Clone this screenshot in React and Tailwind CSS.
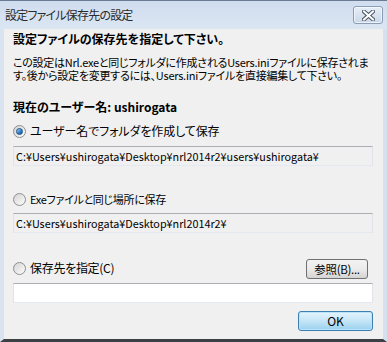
import React from 'react';

const font = { fontFamily: '"Noto Sans CJK JP", "Liberation Sans", sans-serif' };

const Radio = ({ checked = false }) => (
  <span className="relative flex h-[13px] w-[13px] shrink-0 items-center justify-center rounded-full border border-[#8e8f8f] bg-gradient-to-br from-[#d4d4d4] to-[#fcfcfc]">
    {checked && (
      <span className="h-[7px] w-[7px] rounded-full border border-[#1b4f86] bg-gradient-to-br from-[#a9dcfb] via-[#3b8ad0] to-[#0f4d8c]" />
    )}
  </span>
);

const RadioRow = ({ checked, label, className = '', labelClassName = '' }) => (
  <div className={`flex h-[16px] items-center gap-[4px] ${className}`}>
    <Radio checked={checked} />
    <span className={`whitespace-nowrap leading-[16px] text-black [font-feature-settings:'palt'] ${labelClassName}`}>{label}</span>
  </div>
);

const PathBox = ({ value = '', white = false, className = '' }) => (
  <div
    className={`flex h-[20px] items-center overflow-hidden whitespace-nowrap border border-t-[#abadb3] border-x-[#e2e3ea] border-b-[#e3e9ef] px-[2px] text-[10.8px] leading-[16px] text-black ${
      white ? 'bg-white' : 'bg-[#f0f0f0]'
    } ${className}`}
  >
    {value}
  </div>
);

const CloseButton = () => (
  <div className="flex h-[18px] w-[30px] items-center justify-center rounded-[3px] border border-[#8b9db8] bg-gradient-to-b from-[#e7eef7] to-[#cbd8e9] shadow-[inset_0_0_0_1px_rgba(255,255,255,0.6)]">
    <svg width="13" height="11" viewBox="0 0 13 11">
      <path d="M2 1.5 L11 9.5 M11 1.5 L2 9.5" stroke="#4b5563" strokeWidth="4" strokeLinecap="square" />
      <path d="M2 1.5 L11 9.5 M11 1.5 L2 9.5" stroke="#ffffff" strokeWidth="2" strokeLinecap="square" />
    </svg>
  </div>
);

export default function App() {
  return (
    <div className="flex h-[342px] w-[387px] flex-col overflow-hidden bg-[#d3e0f0]" style={font}>
      <div className="flex h-[29px] shrink-0 items-center justify-between border-t border-t-[#6a7b92] bg-gradient-to-b from-[#d0ddee] to-[#dbe6f3] pl-[5px] pr-[4px]">
        <span className="text-[12px] leading-[16px] tracking-[-0.8px] text-[#2b2b2b] [font-feature-settings:'palt']">設定ファイル保存先の設定</span>
        <CloseButton />
      </div>
      <div className="flex min-w-0 flex-1 border-l-[4px] border-r-[4px] border-b-[3px] border-l-[#dae4f1] border-r-[#d5e1f0] border-b-[#3c3f44]">
        <div className="flex min-w-0 flex-1 flex-col bg-[#f0f0f0] pl-[9px] pr-[10px] pt-[2px]">
          <div className="text-[12px] font-bold leading-[16px] text-black [font-feature-settings:'palt']">
            設定ファイルの保存先を指定して下さい。
          </div>
          <div className="mt-[9px] text-[11px] leading-[13px] tracking-[-0.25px] text-black [font-feature-settings:'palt']">
            <div className="whitespace-nowrap">この設定はNrl.exeと同じフォルダに作成されるUsers.iniファイルに保存されま</div>
            <div className="whitespace-nowrap">す。後から設定を変更するには、Users.iniファイルを直接編集して下さい。</div>
          </div>
          <div className="mt-[17px] text-[12px] font-bold leading-[16px] text-black [font-feature-settings:'palt']">
            現在のユーザー名: ushirogata
          </div>
          <RadioRow
            checked
            label="ユーザー名でフォルダを作成して保存"
            className="mt-[8px]"
            labelClassName="text-[12px] tracking-[-0.1px]"
          />
          <PathBox className="mt-[7px]" value="C:¥Users¥ushirogata¥Desktop¥nrl2014r2¥users¥ushirogata¥" />
          <RadioRow
            label="Exeファイルと同じ場所に保存"
            className="mt-[25px]"
            labelClassName="text-[11px] tracking-[-0.3px]"
          />
          <PathBox className="mt-[6px]" value="C:¥Users¥ushirogata¥Desktop¥nrl2014r2¥" />
          <div className="mt-[26px] flex h-[20px] items-center justify-between">
            <RadioRow label="保存先を指定(C)" className="mb-[2px]" labelClassName="text-[12px] tracking-[-0.3px]" />
            <button className="mr-[5px] flex h-[20px] w-[62px] shrink-0 items-center justify-center whitespace-nowrap rounded-[3px] border border-[#707070] bg-gradient-to-b from-[#f2f2f2] via-[#ebebeb] to-[#d4d4d4] text-[11.5px] leading-[16px] tracking-[-0.3px] text-black">
              参照(B)...
            </button>
          </div>
          <PathBox white className="mt-[4px]" />
          <div className="mt-[8px] flex justify-end">
            <button className="flex h-[20px] w-[75px] items-center justify-center rounded-[3px] border border-[#3c7fb1] bg-gradient-to-b from-[#e5f4fc] via-[#c4e5f6] to-[#98d1ef] text-[12px] leading-[16px] text-black shadow-[inset_0_0_0_1px_#b9e4fb]">
              OK
            </button>
          </div>
        </div>
      </div>
    </div>
  );
}
